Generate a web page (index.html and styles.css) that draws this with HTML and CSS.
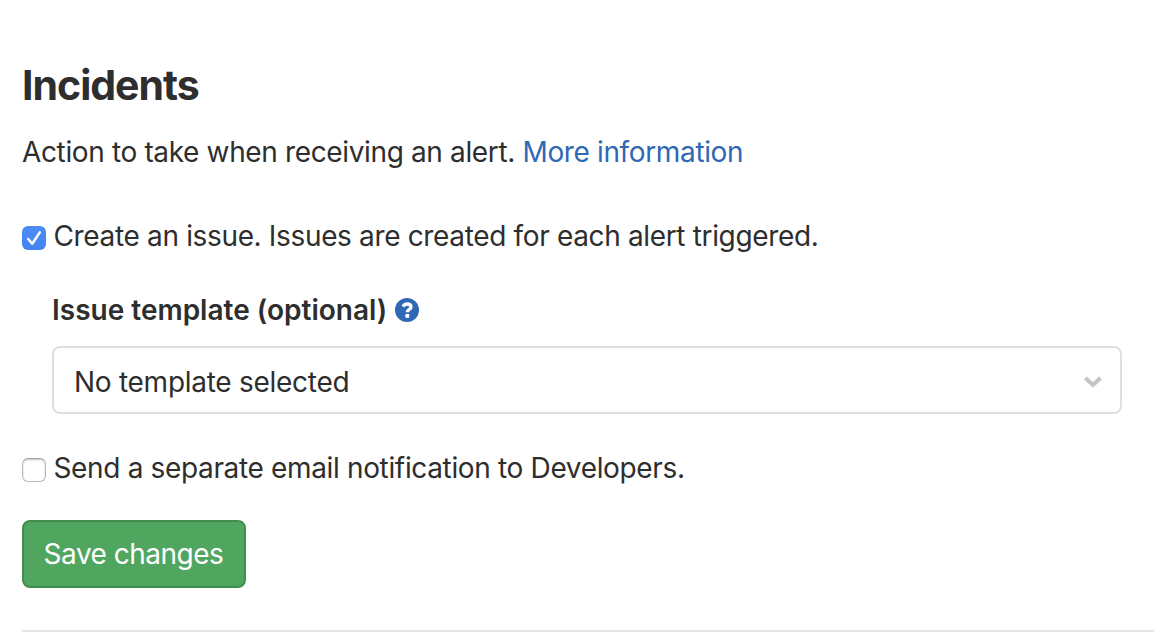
FILE: index.html
```html
<!DOCTYPE html>
<html lang="en">
<head>
<meta charset="utf-8">
<title>Incidents</title>
<link rel="stylesheet" href="styles.css">
</head>
<body>
<main class="settings">
  <h1 class="title">Incidents</h1>
  <p class="intro">Action to take when receiving an alert. <a class="link" href="#">More information</a></p>
  <div class="check-row check-issue">
    <span class="box checked"><svg width="24" height="24" viewBox="0 0 24 24"><path d="M6.2 13L10.2 17.8L17.8 6.4" fill="none" stroke="#fff" stroke-width="2.5" stroke-linecap="round" stroke-linejoin="round"/></svg></span>
    <span>Create an issue. Issues are created for each alert triggered.</span>
  </div>
  <section class="template">
    <div class="label"><span>Issue template (optional)</span>
      <svg class="help" width="24" height="24" viewBox="0 0 24 24"><circle cx="12" cy="12" r="12" fill="#2f68b4"/><path d="M8.1 8.6C8.9 6.8 10.3 6 12.1 6C14.5 6 16 7.1 16 9C16 11.4 12.3 11.3 12.3 14.2" fill="none" stroke="#fff" stroke-width="3.3"/><rect x="10.4" y="16" width="3.8" height="3.8" rx=".5" fill="#fff"/></svg>
    </div>
    <div class="select"><span>No template selected</span>
      <svg width="20" height="14" viewBox="0 0 20 14"><path d="M2.5 3L10 10L17.5 3" fill="none" stroke="#c4c4c4" stroke-width="4.2"/></svg>
    </div>
  </section>
  <div class="check-row check-email">
    <span class="box"></span>
    <span>Send a separate email notification to Developers.</span>
  </div>
  <button class="save">Save changes</button>
  <hr class="rule">
</main>
</body>
</html>
```
FILE: styles.css
```css
* { box-sizing: border-box; }
body { margin: 0; background: #fff; color: #2e2e2e; font: 28px/40px Inter, "Liberation Sans", sans-serif; letter-spacing: -0.36px; overflow: hidden; }
.settings { display: flex; flex-direction: column; padding: 61px 0 0 22px; height: 634px; white-space: nowrap; }
.title { margin: 0; font-size: 41px; line-height: 48px; font-weight: 700; letter-spacing: -1px; }
.intro { margin: 23px 0 0; }
.link { color: #2f68b4; text-decoration: none; }
.check-row { display: flex; align-items: center; gap: 7.5px; height: 40px; letter-spacing: -0.345px; }
.check-issue { margin-top: 44px; }
.box { width: 24px; height: 24px; border: 1px solid #b9b9b9; border-top-color: #a2a2a2; border-radius: 6px; background: #fff; box-shadow: inset 0 1px 2px #c4c4c4; margin-top: 4px; flex: none; }
.box.checked { border: 0; box-shadow: none; background: linear-gradient(#4b8cf7, #4583f4); }
.box svg { display: block; }
.template { padding: 34px 32px 0 30px; }
.label { display: flex; align-items: center; gap: 8px; font-weight: 600; letter-spacing: 0; height: 40px; }
.select { display: flex; align-items: center; justify-content: space-between; margin-top: 16px; height: 68px; border: 2px solid #dfdfdf; border-radius: 8px; padding: 4px 17px 0 20px; letter-spacing: -0.27px; }
.check-email { margin-top: 34px; }
.save { align-self: flex-start; margin-top: 32px; width: 224px; height: 68px; background: #50a65f; border: 2px solid #438c50; border-radius: 8px; color: #fff; font: inherit; letter-spacing: -0.5px; padding: 0 1px 0 0; }
.rule { margin: 42px 0 0; border: 0; height: 2px; width: 100%; background: #e5e5e5; flex: none; }
```
